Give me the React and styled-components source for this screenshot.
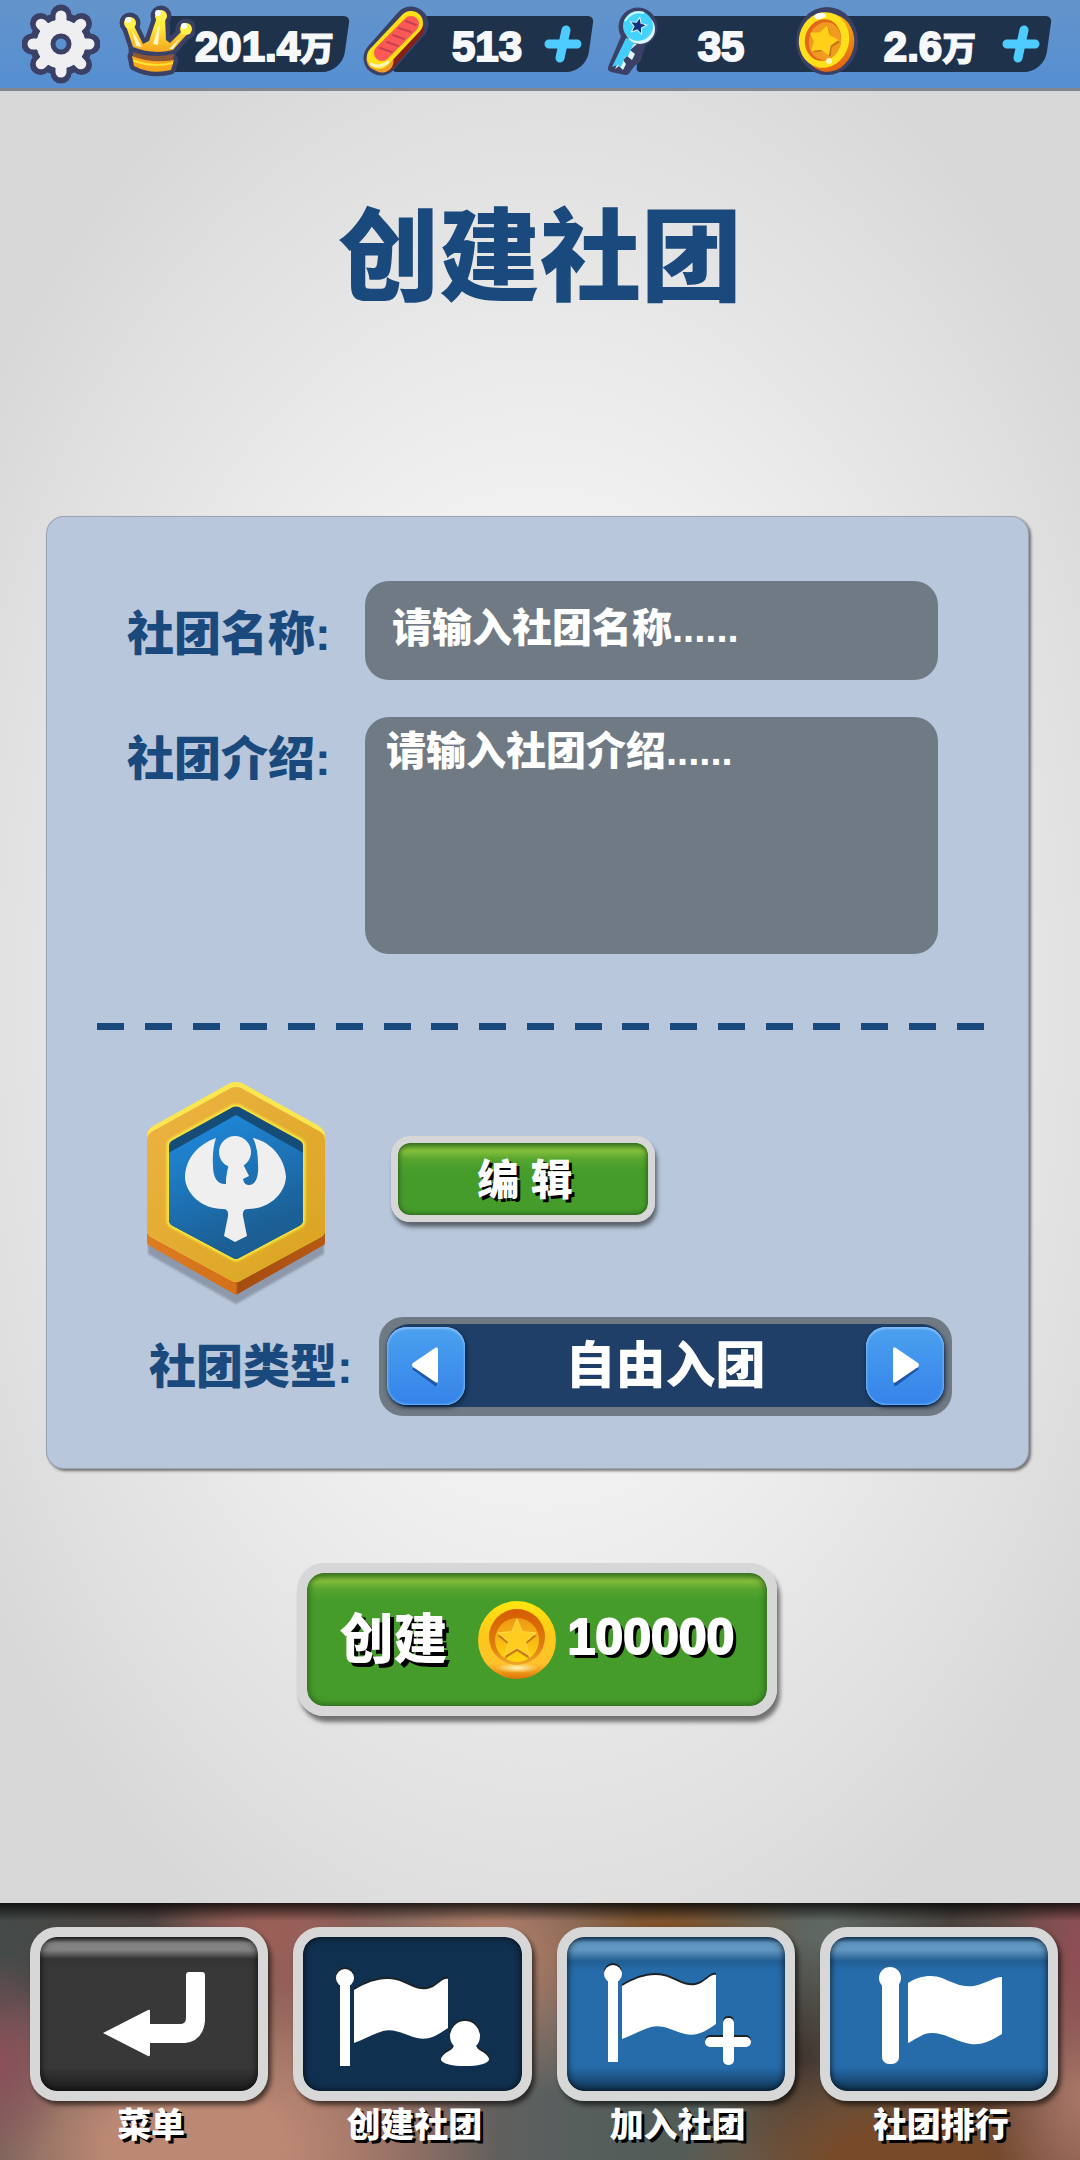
import React, { useState } from "react";
import styled, { createGlobalStyle, css } from "styled-components";

const GlobalStyle = createGlobalStyle`
  *, *::before, *::after { box-sizing: border-box; }
  body {
    margin: 0;
    background: #d8d8d8;
    font-family: "Liberation Sans", "Noto Sans CJK SC", sans-serif;
    font-weight: 900;
  }
  button, input, textarea { font: inherit; color: inherit; }
  button { margin: 0; padding: 0; border: 0; background: none; cursor: pointer; }
  svg { display: block; flex: none; }
`;

const Page = styled.div`
  min-height: 100vh;
  display: flex;
  flex-direction: column;
`;

/* ---------- top bar ---------- */

const TopBar = styled.header`
  display: flex;
  align-items: center;
  gap: 12px;
  height: 91px;
  padding: 0 28px 0 22px;
  background: linear-gradient(#6494cb, #558fd2);
  border-bottom: 3px solid #84878f;
`;

const GearButton = styled.button`
  margin-right: 7px;
`;

const Chip = styled.div`
  position: relative;
  display: flex;
  align-items: center;
  height: 56px;
  flex: 1 1 ${(p) => p.$basis}px;
  min-width: 0;
  padding-right: ${(p) => (p.$wide ? 20 : 12)}px;
  margin-left: ${(p) => (p.$joined ? -12 : 0)}px;

  &::before {
    content: "";
    position: absolute;
    inset: 0 ${(p) => (p.$open ? -40 : 4)}px 0 34px;
    background: #1e324c;
    border-radius: 4px 6px 20px 4px;
    transform: skewX(-8deg);
  }
  > * { position: relative; }
  > svg { margin-bottom: 6px; }
`;

const Amount = styled.span`
  flex: 1;
  padding-top: 6px;
  text-align: center;
  white-space: nowrap;
  color: #f7f8fb;
  font-size: 42px;
  line-height: 56px;
  font-weight: 700;
  -webkit-text-stroke: 2px #f7f8fb;

  small {
    font-size: 34px;
    font-weight: 900;
    line-height: 1;
    -webkit-text-stroke: 1px #f7f8fb;
  }
`;

/* ---------- content ---------- */

const Main = styled.main`
  flex: 1;
  display: flex;
  flex-direction: column;
  padding: 117px 0 180px;
  background: radial-gradient(ellipse 62% 58% at 50% 50%, #fbfbfb 0%, #f3f3f3 42%, #e7e7e7 68%, #dedede 88%, #d8d8d8 100%);
`;

const Title = styled.h1`
  margin: 0 0 209px;
  text-align: center;
  color: #1a497d;
  font-size: 101px;
  line-height: 100px;
  font-weight: 900;
`;

const Panel = styled.section`
  margin: 0 52px 0 47px;
  padding: 64px 0 52px;
  background: #b8c7db;
  border-radius: 17px;
  box-shadow: 0 0 0 1px #9ba4b2, 2px 2px 3px 1px rgba(0, 0, 0, 0.5);
`;

const FieldRow = styled.div`
  display: flex;
  align-items: flex-start;
  padding: 0 90px 0 80px;
  margin-bottom: 37px;
`;

const Label = styled.label`
  flex: none;
  width: 238px;
  padding-top: ${(p) => p.$top || 0}px;
  color: #1a497d;
  font-size: 47px;
  line-height: 60px;
`;

const fieldLook = css`
  display: block;
  flex: 1;
  min-width: 0;
  border: 0;
  outline: 0;
  background: #707a84;
  border-radius: 24px;
  color: #fff;
  font-size: 40px;
  line-height: 48px;
  &::placeholder { color: #fff; opacity: 1; }
`;

const NameInput = styled.input`
  ${fieldLook}
  height: 99px;
  padding: 0 24px 4px 27px;
`;

const IntroInput = styled.textarea`
  ${fieldLook}
  height: 237px;
  padding: 10px 24px 10px 21px;
  resize: none;
`;

const Dashes = styled.div`
  display: flex;
  justify-content: space-between;
  margin: 69px 44px 52px 50px;
  i {
    width: 27px;
    height: 7px;
    background: #1a497d;
  }
`;

const EmblemRow = styled.div`
  display: flex;
  align-items: flex-start;
  padding-left: 100px;
  gap: 66px;
`;

const glossyGreen = css`
  background: linear-gradient(#4c8f2a 0, #84be3b 8px, #57a62f 16px, #469c2b 27px, #469c2b 100%) padding-box, linear-gradient(#d7d7d7, #d7d7d7) border-box;
  color: #fff;
`;

const EditButton = styled.button`
  ${glossyGreen}
  width: 264px;
  height: 86px;
  margin-top: 54px;
  padding: 4px 0 0 4px;
  border: 7px solid #d7d7d7;
  border-radius: 19px;
  font-size: 42px;
  line-height: 60px;
  text-shadow: 3px 3px 0 #000;
  box-shadow: 2px 5px 4px rgba(0, 0, 0, 0.5), inset 0 0 5px 1px #2b5d1b;
`;

const TypeRow = styled.div`
  display: flex;
  align-items: center;
  padding: 0 76px 0 102px;
  margin-top: 9px;
  ${Label} { width: 230px; }
`;

const Stepper = styled.div`
  flex: 1;
  height: 99px;
  padding: 7px 8px 9px;
  border-radius: 24px;
  background: #707a84;
`;

const StepperTrack = styled.div`
  display: flex;
  align-items: center;
  justify-content: space-between;
  height: 83px;
  border-radius: 22px;
  background: #1f3f69;
`;

const StepButton = styled.button`
  display: grid;
  place-items: center;
  width: 78px;
  height: 78px;
  border-radius: 20px;
  background: linear-gradient(#4ba1ef, #3583ea);
  box-shadow: inset 0 2px 2px #82bbf8, inset 0 0 2px 1px #66b0f5, 1px 2px 5px #0c1e36;
`;

const StepValue = styled.output`
  color: #fff;
  font-size: 50px;
  line-height: 72px;
`;

const CreateButton = styled.button`
  ${glossyGreen}
  align-self: center;
  display: flex;
  align-items: center;
  justify-content: center;
  width: 480px;
  height: 153px;
  margin: 95px 6px 0 0;
  border: 10px solid #d7d7d7;
  border-radius: 27px;
  text-shadow: 4px 4px 0 #000;
  box-shadow: 3px 6px 4px rgba(0, 0, 0, 0.5), inset 0 0 7px 1px #2b5d1b;
`;

const CreateText = styled.span`
  margin-right: 30px;
  font-size: 54px;
  line-height: 80px;
`;

const Price = styled.span`
  margin-left: 12px;
  padding-bottom: 6px;
  font-size: 50px;
  line-height: 60px;
  -webkit-text-stroke: 2px #fff;
`;

/* ---------- bottom navigation ---------- */

const NavBar = styled.nav`
  display: grid;
  grid-template-columns: repeat(4, 1fr);
  gap: 25px;
  padding: 24px 22px 10px 30px;
  background:
    linear-gradient(rgba(0, 0, 0, 0.75) 0, rgba(0, 0, 0, 0) 18px),
    radial-gradient(ellipse 70px 110px at 0% 62%, #8c4f5a, transparent),
    radial-gradient(ellipse 120px 110px at 25% 12%, #9c6058, transparent),
    radial-gradient(ellipse 150px 150px at 46% 20%, #bb8068, transparent),
    radial-gradient(ellipse 300px 190px at 18% 95%, #bb8874 30%, transparent),
    radial-gradient(ellipse 150px 110px at 61% 12%, #855126, transparent),
    radial-gradient(ellipse 70px 130px at 100% 20%, #8e4e54, transparent),
    radial-gradient(ellipse 90px 150px at 100% 75%, #a87666, transparent),
    radial-gradient(ellipse 230px 110px at 84% 100%, #784a29 30%, transparent),
    radial-gradient(ellipse 90px 120px at 74% 60%, #40332d, transparent),
    linear-gradient(90deg, #444b49, #4e4340 14%, #8a5f57 28%, #59605f 50%, #535b57 62%, #5f6863 77%, #48423d 88%, #7d5450);
`;

const NavItem = styled.button`
  display: flex;
  flex-direction: column;
  align-items: center;
  min-width: 0;
  color: #fff;
  font-size: 34px;
  line-height: 49px;
  text-shadow: 3px 3px 0 #000;
`;

const NavText = styled.span`
  padding-left: 4px;
`;

const navFaces = {
  dark: "linear-gradient(#2e2e2e 0, #828282 6px, #828282 13px, #343434 22px, #383838 34px, #383838 130px, #1c1c1c 100%)",
  active: "linear-gradient(#10304f, #10304f)",
  blue: "linear-gradient(#1c4f80 0, #6197c3 6px, #6197c3 13px, #235f94 24px, #266cab 34px, #266cab 130px, #113454 100%)",
};

const NavFace = styled.span`
  display: grid;
  place-items: center;
  width: 100%;
  height: 174px;
  border: 10px solid #d7d7d7;
  border-radius: 27px;
  background: ${(p) => navFaces[p.$tone]} padding-box, linear-gradient(#d7d7d7, #d7d7d7) border-box;
  box-shadow: 3px 4px 5px rgba(0, 0, 0, 0.6), inset 0 0 6px 1px rgba(0, 0, 0, 0.65);
  overflow: hidden;
`;

/* ---------- drawings ---------- */

const star = (cx, cy, R, r) =>
  Array.from({ length: 10 }, (_, i) => {
    const a = (-90 + i * 36) * (Math.PI / 180);
    const d = i % 2 ? r : R;
    return `${(cx + d * Math.cos(a)).toFixed(1)},${(cy + d * Math.sin(a)).toFixed(1)}`;
  }).join(" ");

const GearIcon = () => {
  const spokes = [0, 45, 90, 135, 180, 225, 270, 315];
  return (
    <svg width="78" height="80" viewBox="0 0 78 80">
      <g fill="#3a4066" stroke="#3a4066">
        <circle cx="39" cy="40" r="31" />
        {spokes.map((a) => (
          <line key={a} x1="39" y1="40" x2="39" y2="11" strokeWidth="21" strokeLinecap="round" transform={`rotate(${a} 39 40)`} />
        ))}
      </g>
      <g fill="#efeff1" stroke="#efeff1">
        <circle cx="39" cy="40" r="24" />
        {spokes.map((a) => (
          <line key={a} x1="39" y1="40" x2="39" y2="12" strokeWidth="11" strokeLinecap="round" transform={`rotate(${a} 39 40)`} />
        ))}
      </g>
      <circle cx="39" cy="40" r="8" fill="#5b91cf" stroke="#3a4066" strokeWidth="5" />
    </svg>
  );
};

const CrownIcon = () => {
  const body = "M7 22 L14 43 Q34 51 54 46 L70 28 L64 26 L51 39 L47 36 L46 13 L38 13 L30 37 L24 40 L14 20 Z";
  const band = "M13 52 Q33 60 55 56 L52 66 Q32 71 15 62 Z";
  return (
    <svg width="76" height="74" viewBox="0 0 76 74">
      <defs>
        <linearGradient id="crownGold" x1="0" y1="0" x2="0" y2="1">
          <stop offset="0.3" stopColor="#ffe93a" />
          <stop offset="1" stopColor="#f5a51d" />
        </linearGradient>
      </defs>
      <g fill="#3a4066" stroke="#3a4066" strokeWidth="9" strokeLinejoin="round">
        <path d={body} /><path d={band} /><path d="M14 44 L53 46 L52 60 L15 60 Z" />
        <circle cx="11" cy="19" r="6" /><circle cx="42" cy="12" r="6" /><circle cx="67" cy="25" r="6" />
      </g>
      <path d="M14 48 Q33 55 55 50 L54 57 Q32 62 14 54 Z" fill="#8a5634" />
      <path d={body} fill="url(#crownGold)" />
      <path d="M13 26 L17 42 L23 43 Z M41 18 L34 40 L39 41 Z M62 33 L50 45 L54 45 Z" fill="#fff6c8" />
      <path d={band} fill="#f9a81d" />
      <path d="M14 55 Q33 63 54 58 L54 60 Q33 65 15 58 Z" fill="#ffe22f" />
      <g fill="#fff04a"><circle cx="11" cy="19" r="6" /><circle cx="42" cy="12" r="6" /><circle cx="67" cy="25" r="6" /></g>
      <g fill="#fff"><circle cx="9" cy="16" r="3" /><circle cx="39" cy="9" r="3" /><circle cx="65" cy="22" r="3" /></g>
    </svg>
  );
};

const BoardIcon = () => (
  <svg width="68" height="70" viewBox="0 0 68 70" strokeLinecap="round">
    <line x1="49" y1="18" x2="19" y2="52" stroke="#3a4066" strokeWidth="35" />
    <line x1="50" y1="22" x2="22" y2="54" stroke="#8a1f14" strokeWidth="24" />
    <line x1="20" y1="55" x2="16" y2="53" stroke="#f0a028" strokeWidth="23" />
    <line x1="49" y1="17" x2="17" y2="51" stroke="#ffe015" strokeWidth="24" />
    <line x1="49" y1="18" x2="20" y2="47" stroke="#fb5858" strokeWidth="16" />
    <path d="M44 15 L54 19 M37 22 L49 26 M31 29 L42 33 M25 36 L36 40 M18 42 L30 46" stroke="#c8404c" strokeWidth="2" />
    <path d="M9 58 Q17 63 26 56" stroke="#fff3c0" strokeWidth="3" fill="none" />
  </svg>
);

const KeyIcon = () => (
  <svg width="53" height="69" viewBox="0 0 53 69" strokeLinejoin="round">
    <g fill="#3a4066" stroke="#3a4066">
      <circle cx="32" cy="20" r="19" />
      <path d="M19 30 L6 61 L20 64 L25 57 L31 52 L36 36 Z" strokeWidth="8" />
    </g>
    <path d="M22 34 L9 62 L13 59 L17 63 L20 57 L17 53 L21 49 L26 53 L29 47 L24 43 L31 37 Z" fill="#dff6ff" />
    <path d="M20 31 L6 60 L11 58 L15 60 L19 50 L22 49 L27 38 L31 35 Z" fill="#44cdfb" />
    <circle cx="34" cy="22" r="15" fill="#dff6ff" />
    <circle cx="32" cy="19" r="15" fill="#44d3fb" />
    <path d="M19 14 Q26 3 38 6" fill="none" stroke="#d6f7ff" strokeWidth="2" />
    <polygon points={star(32, 19, 9, 4)} fill="#14317c" stroke="#d6f7ff" strokeWidth="1" transform="rotate(12 32 19)" />
  </svg>
);

const TiltCoinIcon = () => (
  <svg width="63" height="68" viewBox="0 0 63 68">
    <defs>
      <linearGradient id="rimSide" x1="0" y1="0" x2="0.5" y2="1">
        <stop offset="0" stopColor="#ffc21c" />
        <stop offset="1" stopColor="#e6680f" />
      </linearGradient>
    </defs>
    <ellipse cx="32" cy="34" rx="31" ry="34" fill="#3a4066" />
    <ellipse cx="34" cy="36" rx="25" ry="29" fill="url(#rimSide)" transform="rotate(14 34 36)" />
    <ellipse cx="29" cy="33" rx="25" ry="28" fill="#ffe01a" transform="rotate(14 29 33)" />
    <ellipse cx="28" cy="33" rx="18" ry="21" fill="#e2681b" transform="rotate(14 28 33)" />
    <ellipse cx="30" cy="34" rx="16" ry="19" fill="#f19a20" transform="rotate(14 30 34)" />
    <polygon points={star(30, 36, 15, 8)} fill="#c27415" strokeLinejoin="round" transform="rotate(14 30 36)" />
    <polygon points={star(28, 34, 14, 8)} fill="#ffcf1a" stroke="#ffcf1a" strokeWidth="2" strokeLinejoin="round" transform="rotate(14 28 34)" />
    <ellipse cx="25" cy="9" rx="6" ry="3" fill="#fff" transform="rotate(-10 25 9)" />
    <circle cx="34" cy="54" r="3" fill="#fff7c0" />
  </svg>
);

const CoinIcon = () => (
  <svg width="78" height="80" viewBox="0 0 78 80">
    <defs>
      <linearGradient id="coinRim" x1="0" y1="0" x2="0" y2="1">
        <stop offset="0" stopColor="#ffe60f" />
        <stop offset="0.45" stopColor="#ffc71a" />
        <stop offset="0.8" stopColor="#ffc22a" />
        <stop offset="1" stopColor="#dd7408" />
      </linearGradient>
      <linearGradient id="coinWell" x1="0" y1="0" x2="0" y2="1">
        <stop offset="0" stopColor="#d55c02" />
        <stop offset="0.7" stopColor="#e07f10" />
        <stop offset="1" stopColor="#f0a828" />
      </linearGradient>
      <linearGradient id="coinFace" x1="0" y1="0" x2="0" y2="1">
        <stop offset="0" stopColor="#ef9715" />
        <stop offset="1" stopColor="#ffd90f" />
      </linearGradient>
      <radialGradient id="coinShine">
        <stop offset="0" stopColor="#fff6b8" />
        <stop offset="1" stopColor="#fff6b8" stopOpacity="0" />
      </radialGradient>
    </defs>
    <circle cx="39" cy="40" r="39" fill="url(#coinRim)" />
    <ellipse cx="39" cy="68" rx="22" ry="5" fill="url(#coinShine)" />
    <circle cx="39" cy="37" r="28" fill="url(#coinWell)" />
    <circle cx="39" cy="40" r="22" fill="url(#coinFace)" />
    <polygon points={star(39, 40, 21, 9)} fill="#c77b12" transform="translate(0 2)" />
    <polygon points={star(39, 39, 20, 9)} fill="#ffcd22" stroke="#ffd94a" strokeWidth="1" strokeLinejoin="round" />
  </svg>
);

const PlusIcon = () => (
  <svg width="38" height="40" viewBox="0 0 38 40" stroke="#4fccff" strokeWidth="9" strokeLinecap="round">
    <path d="M22 6 L16 34 M5 20 L33 20" />
  </svg>
);

const EmblemIcon = () => (
  <svg width="178" height="226" viewBox="0 0 178 226" role="img" aria-label="社团徽章" strokeLinejoin="round">
    <defs>
      <linearGradient id="embGold" x1="0" y1="0" x2="1" y2="1">
        <stop offset="0" stopColor="#edb343" />
        <stop offset="1" stopColor="#d9a41f" />
      </linearGradient>
      <linearGradient id="embBlue" x1="0.2" y1="0" x2="0.5" y2="0.8">
        <stop offset="0" stopColor="#1f8ade" />
        <stop offset="1" stopColor="#1b5f94" />
      </linearGradient>
      <linearGradient id="embEdge" x1="0" y1="0" x2="1" y2="0">
        <stop offset="0" stopColor="#dc7c23" />
        <stop offset="0.5" stopColor="#d37019" />
        <stop offset="0.51" stopColor="#a54c10" />
        <stop offset="1" stopColor="#b65916" />
      </linearGradient>
      <clipPath id="embClip"><path d="M86 25 Q89 24 92 25 L152 58 Q156 60 156 64 V138 Q156 142 152 144 L92 176 Q89 178 86 176 L26 144 Q22 142 22 138 V64 Q22 60 26 58 Z" /></clipPath>
      <filter id="embSoft" x="-10%" y="-10%" width="120%" height="120%"><feGaussianBlur stdDeviation="1" /></filter>
    </defs>
    <path d="M1 150 H177 V172 L89 222 L1 172 Z" fill="#8d99aa" filter="url(#embSoft)" />
    <path d="M0 140 H178 V160 Q178 163 175 164 L89 213 L3 164 Q0 163 0 160 Z" fill="url(#embEdge)" />
    <path d="M83 1 Q89 -1 95 1 L172 44 Q178 48 178 54 V148 Q178 153 174 155 L93 199 Q89 201 85 199 L4 155 Q0 153 0 148 V54 Q0 48 6 44 Z" fill="#fbe650" />
    <path d="M84 6 Q89 4 94 6 L172 49 Q178 52 178 58 V148 Q178 153 174 155 L93 199 Q89 201 85 199 L4 155 Q0 153 0 148 V58 Q0 52 6 49 Z" fill="url(#embGold)" />
    <path d="M86 25 Q89 24 92 25 L152 58 Q156 60 156 64 V138 Q156 142 152 144 L92 176 Q89 178 86 176 L26 144 Q22 142 22 138 V64 Q22 60 26 58 Z" fill="#164d78" stroke="#f6e53e" strokeWidth="5" filter="url(#embSoft)" />
    <g clipPath="url(#embClip)">
      <rect x="20" y="20" width="140" height="160" fill="#164d78" />
      <path d="M89 33 L160 73 V190 H18 V73 Z" fill="url(#embBlue)" />
    </g>
    <g fill="#efefef">
      <circle cx="88" cy="70" r="16" />
      <path d="M69 56 C52 62 38 76 38 96 C39 112 55 127 76 127 Q82 127 81 134 L77 154 L88 160 L100 154 L96 134 Q95 127 101 127 C122 127 138 112 139 95 C138 76 124 60 106 56 Q111 66 111 82 C112 96 108 103 102 103 Q97 103 96 97 L102 94 L98 86 L96 82 H82 Q80 88 79 97 V102 C71 103 66 96 66 84 Q65 68 69 56 Z" />
    </g>
  </svg>
);

const StepArrow = ({ flip }) => (
  <svg width="78" height="78" viewBox="0 0 78 78">
    <g transform={flip ? "translate(78 0) scale(-1 1)" : undefined}>
      <path d="M25 42 L48 59 Q50 60 50 57 L50 24 Z" fill="#1f58a8" />
      <path d="M26 40 Q24 38 26 36 L48 21 Q51 19 51 23 V54 Q51 57 48 55 Z" fill="#fff" />
    </g>
  </svg>
);

const flagPath = "M51 53 C66 44 80 40 93 43 C106 46 116 57 130 50 C137 46 140 41 145 42 V91 C136 97 127 104 114 101 C102 98 92 91 80 94 C70 97 62 102 51 106 Z";

const ThinFlag = () => (
  <>
    <circle cx="42" cy="41" r="9" />
    <rect x="37" y="41" width="10" height="88" />
    <path d={flagPath} />
  </>
);

const PersonFlag = () => (
  <>
    <ThinFlag />
    <circle cx="162" cy="99" r="15" />
    <path d="M152 106 H172 Q173 111 178 114 Q186 118 186 123 Q182 129 162 129 Q142 129 138 123 Q138 118 146 114 Q151 111 152 106 Z" />
  </>
);

const PlusFlag = () => (
  <>
    <g transform="translate(4 -4)"><ThinFlag /></g>
    <rect x="156" y="81" width="11" height="47" rx="5" />
    <rect x="138" y="100" width="46" height="10" rx="5" />
  </>
);

const ThickFlag = () => (
  <>
    <circle cx="60" cy="41" r="11" />
    <rect x="52" y="41" width="17" height="86" rx="7" />
    <path d="M78 46 C88 39 102 37 112 41 C124 46 134 52 148 48 C158 45 165 40 172 40 V97 C160 104 150 110 136 106 C124 103 114 96 102 96 C93 96 88 101 78 106 Z" />
  </>
);

const BackArrow = () => (
  <path d="M63 96 L108 73 Q110 72 110 74 V87 H140 Q146 87 146 81 V38 Q146 35 149 35 H162 Q165 35 165 38 V84 Q163 104 145 106 H110 V117 Q110 120 108 119 Z" />
);

const NavIcon = ({ children, shade }) => (
  <svg width="218" height="154" viewBox="0 0 218 154">
    {shade && <g fill="#1c2226" transform="translate(0 -2)">{children}</g>}
    <g fill="#fff">{children}</g>
  </svg>
);

/* ---------- screen ---------- */

const joinTypes = ["自由入团", "申请入团", "禁止入团"];

const navItems = [
  { text: "菜单", tone: "dark", icon: <BackArrow /> },
  { text: "创建社团", tone: "active", icon: <PersonFlag />, shade: true },
  { text: "加入社团", tone: "blue", icon: <PlusFlag />, shade: true },
  { text: "社团排行", tone: "blue", icon: <ThickFlag /> },
];

export default function App() {
  const [type, setType] = useState(0);
  const step = (d) => setType((t) => (t + d + joinTypes.length) % joinTypes.length);

  return (
    <Page>
      <GlobalStyle />
      <TopBar>
        <GearButton type="button" aria-label="设置"><GearIcon /></GearButton>
        <Chip $basis={231} $wide>
          <CrownIcon />
          <Amount>201.4<small>万</small></Amount>
        </Chip>
        <Chip $basis={232}>
          <BoardIcon />
          <Amount>513</Amount>
          <button type="button" aria-label="增加滑板"><PlusIcon /></button>
        </Chip>
        <Chip $basis={189} $open>
          <KeyIcon />
          <Amount>35</Amount>
        </Chip>
        <Chip $basis={257} $joined>
          <TiltCoinIcon />
          <Amount>2.6<small>万</small></Amount>
          <button type="button" aria-label="增加金币"><PlusIcon /></button>
        </Chip>
      </TopBar>

      <Main>
        <Title>创建社团</Title>
        <Panel>
          <FieldRow>
            <Label htmlFor="club-name" $top={23}>社团名称:</Label>
            <NameInput id="club-name" type="text" placeholder="请输入社团名称......" />
          </FieldRow>
          <FieldRow>
            <Label htmlFor="club-intro" $top={12}>社团介绍:</Label>
            <IntroInput id="club-intro" placeholder="请输入社团介绍......" />
          </FieldRow>
          <Dashes aria-hidden="true">
            {Array.from({ length: 19 }, (_, i) => <i key={i} />)}
          </Dashes>
          <EmblemRow>
            <EmblemIcon />
            <EditButton type="button">编 辑</EditButton>
          </EmblemRow>
          <TypeRow>
            <Label htmlFor="club-type">社团类型:</Label>
            <Stepper>
              <StepperTrack>
                <StepButton type="button" aria-label="上一个" onClick={() => step(-1)}><StepArrow /></StepButton>
                <StepValue id="club-type">{joinTypes[type]}</StepValue>
                <StepButton type="button" aria-label="下一个" onClick={() => step(1)}><StepArrow flip /></StepButton>
              </StepperTrack>
            </Stepper>
          </TypeRow>
        </Panel>
        <CreateButton type="button">
          <CreateText>创建</CreateText>
          <CoinIcon />
          <Price>100000</Price>
        </CreateButton>
      </Main>

      <NavBar>
        {navItems.map((item) => (
          <NavItem type="button" key={item.text}>
            <NavFace $tone={item.tone}>
              <NavIcon shade={item.shade}>{item.icon}</NavIcon>
            </NavFace>
            <NavText>{item.text}</NavText>
          </NavItem>
        ))}
      </NavBar>
    </Page>
  );
}
